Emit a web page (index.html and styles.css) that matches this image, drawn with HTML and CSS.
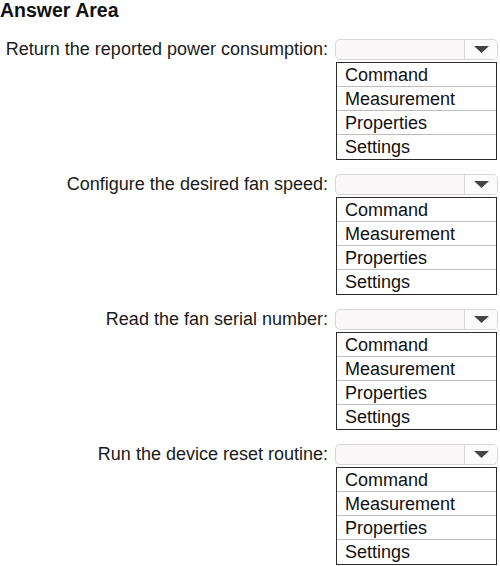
FILE: index.html
```html
<!DOCTYPE html>
<html lang="en">
<head>
    <meta charset="UTF-8">
    <meta name="viewport" content="width=device-width, initial-scale=1.0">
    <title>Answer Area</title>
    <link rel="stylesheet" href="styles.css">
</head>
<body>
    <h1 class="title">Answer Area</h1>
    <div class="answers">
        <div class="question">Return the reported power consumption:</div>
        <div class="control">
            <div class="select"><span class="select-value"></span><span class="select-arrow"><svg width="15" height="7" viewBox="0 0 15 7"><path d="M0 0 H15 L7.5 7 Z" fill="#444"/></svg></span></div>
            <ul class="options">
                <li>Command</li>
                <li>Measurement</li>
                <li>Properties</li>
                <li>Settings</li>
            </ul>
        </div>

        <div class="question">Configure the desired fan speed:</div>
        <div class="control">
            <div class="select"><span class="select-value"></span><span class="select-arrow"><svg width="15" height="7" viewBox="0 0 15 7"><path d="M0 0 H15 L7.5 7 Z" fill="#444"/></svg></span></div>
            <ul class="options">
                <li>Command</li>
                <li>Measurement</li>
                <li>Properties</li>
                <li>Settings</li>
            </ul>
        </div>

        <div class="question">Read the fan serial number:</div>
        <div class="control">
            <div class="select"><span class="select-value"></span><span class="select-arrow"><svg width="15" height="7" viewBox="0 0 15 7"><path d="M0 0 H15 L7.5 7 Z" fill="#444"/></svg></span></div>
            <ul class="options">
                <li>Command</li>
                <li>Measurement</li>
                <li>Properties</li>
                <li>Settings</li>
            </ul>
        </div>

        <div class="question">Run the device reset routine:</div>
        <div class="control">
            <div class="select"><span class="select-value"></span><span class="select-arrow"><svg width="15" height="7" viewBox="0 0 15 7"><path d="M0 0 H15 L7.5 7 Z" fill="#444"/></svg></span></div>
            <ul class="options">
                <li>Command</li>
                <li>Measurement</li>
                <li>Properties</li>
                <li>Settings</li>
            </ul>
        </div>
    </div>
</body>
</html>
```

FILE: styles.css
```css
body {
    margin: 0;
    padding: 0;
    background-color: #ffffff;
    color: #1a1a1a;
    font-family: "Liberation Sans", Arial, sans-serif;
}
.title {
    margin: 0 0 19px 0;
    font-size: 19.5px;
    line-height: 20px;
    font-weight: bold;
    color: #111;
}
.answers {
    display: grid;
    grid-template-columns: 328px 163px;
    column-gap: 7px;
    row-gap: 14px;
}
.question {
    text-align: right;
    font-size: 18px;
    line-height: 20px;
    white-space: nowrap;
}
.control {
    display: flex;
    flex-direction: column;
    gap: 2px;
}
.select {
    display: flex;
    height: 21px;
    box-sizing: border-box;
    border: 1px solid #d6d6d6;
    border-radius: 5px;
    background-color: #fcf7f8;
    overflow: hidden;
}
.select-value {
    flex: 1;
}
.select-arrow {
    width: 32px;
    display: flex;
    align-items: center;
    justify-content: center;
    border-left: 1px solid #d9d9d9;
    background-color: #fbfbfb;
}
.options {
    list-style: none;
    margin: 0 0 0 1px;
    padding: 0 0 1px 0;
    width: 161px;
    box-sizing: border-box;
    border: 1px solid #2b2b2b;
    color: #111;
}
.options li {
    font-size: 18px;
    line-height: 21px;
    padding: 2px 0 0 8px;
    border-bottom: 1px solid #bdbdbd;
}
.options li:last-child {
    border-bottom: none;
}
```
